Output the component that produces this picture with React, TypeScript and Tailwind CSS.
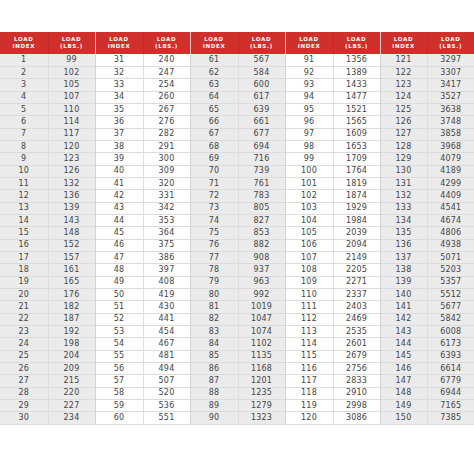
import { Fragment } from "react";

const groups: [number, number][][] = [
  [
    [1, 99], [2, 102], [3, 105], [4, 107], [5, 110], [6, 114], [7, 117], [8, 120], [9, 123], [10, 126],
    [11, 132], [12, 136], [13, 139], [14, 143], [15, 148], [16, 152], [17, 157], [18, 161], [19, 165], [20, 176],
    [21, 182], [22, 187], [23, 192], [24, 198], [25, 204], [26, 209], [27, 215], [28, 220], [29, 227], [30, 234],
  ],
  [
    [31, 240], [32, 247], [33, 254], [34, 260], [35, 267], [36, 276], [37, 282], [38, 291], [39, 300], [40, 309],
    [41, 320], [42, 331], [43, 342], [44, 353], [45, 364], [46, 375], [47, 386], [48, 397], [49, 408], [50, 419],
    [51, 430], [52, 441], [53, 454], [54, 467], [55, 481], [56, 494], [57, 507], [58, 520], [59, 536], [60, 551],
  ],
  [
    [61, 567], [62, 584], [63, 600], [64, 617], [65, 639], [66, 661], [67, 677], [68, 694], [69, 716], [70, 739],
    [71, 761], [72, 783], [73, 805], [74, 827], [75, 853], [76, 882], [77, 908], [78, 937], [79, 963], [80, 992],
    [81, 1019], [82, 1047], [83, 1074], [84, 1102], [85, 1135], [86, 1168], [87, 1201], [88, 1235], [89, 1279], [90, 1323],
  ],
  [
    [91, 1356], [92, 1389], [93, 1433], [94, 1477], [95, 1521], [96, 1565], [97, 1609], [98, 1653], [99, 1709], [100, 1764],
    [101, 1819], [102, 1874], [103, 1929], [104, 1984], [105, 2039], [106, 2094], [107, 2149], [108, 2205], [109, 2271], [110, 2337],
    [111, 2403], [112, 2469], [113, 2535], [114, 2601], [115, 2679], [116, 2756], [117, 2833], [118, 2910], [119, 2998], [120, 3086],
  ],
  [
    [121, 3297], [122, 3307], [123, 3417], [124, 3527], [125, 3638], [126, 3748], [127, 3858], [128, 3968], [129, 4079], [130, 4189],
    [131, 4299], [132, 4409], [133, 4541], [134, 4674], [135, 4806], [136, 4938], [137, 5071], [138, 5203], [139, 5357], [140, 5512],
    [141, 5677], [142, 5842], [143, 6008], [144, 6173], [145, 6393], [146, 6614], [147, 6779], [148, 6944], [149, 7165], [150, 7385],
  ],
];

const widths = [48, 47, 48, 47, 48, 47, 48, 47, 47, 47];

export default function App() {
  return (
    <div className="h-[474px] w-[474px] bg-white pt-[32px] font-['DejaVu_Sans',sans-serif]">
      <table className="w-[474px] table-fixed border-collapse">
        <colgroup>
          {widths.map((w, i) => (
            <col key={i} style={{ width: w }} />
          ))}
        </colgroup>
        <thead>
          <tr className="h-[22px] bg-[#d0302c] text-[5.5px] font-bold uppercase leading-[7px] tracking-[0.7px] text-white">
            {groups.map((_, g) => (
              <Fragment key={g}>
                <th className={g > 0 ? "border-l border-[#f0c8c6] font-bold" : "font-bold"}>
                  LOAD
                  <br />
                  INDEX
                </th>
                <th className="border-l border-[#bd2a27] font-bold">
                  LOAD
                  <br />
                  (LBS.)
                </th>
              </Fragment>
            ))}
          </tr>
        </thead>
        <tbody className="text-[8px] leading-none tracking-[0.2px] text-[#454545]">
          {groups[0].map((_, r) => (
            <tr key={r} className="h-[12.35px] border-b border-[#dcdcdc]">
              {groups.map((grp, g) => {
                const bg = g % 2 === 0 ? "bg-[#ebebeb]" : "bg-white";
                const [idx, lbs] = grp[r];
                return (
                  <Fragment key={g}>
                    <td className={`${bg} text-center ${g > 0 ? "border-l border-[#d4d4d4]" : ""}`}>{idx}</td>
                    <td className={`${bg} border-l border-[#dedede] text-center`}>{lbs}</td>
                  </Fragment>
                );
              })}
            </tr>
          ))}
        </tbody>
      </table>
    </div>
  );
}
